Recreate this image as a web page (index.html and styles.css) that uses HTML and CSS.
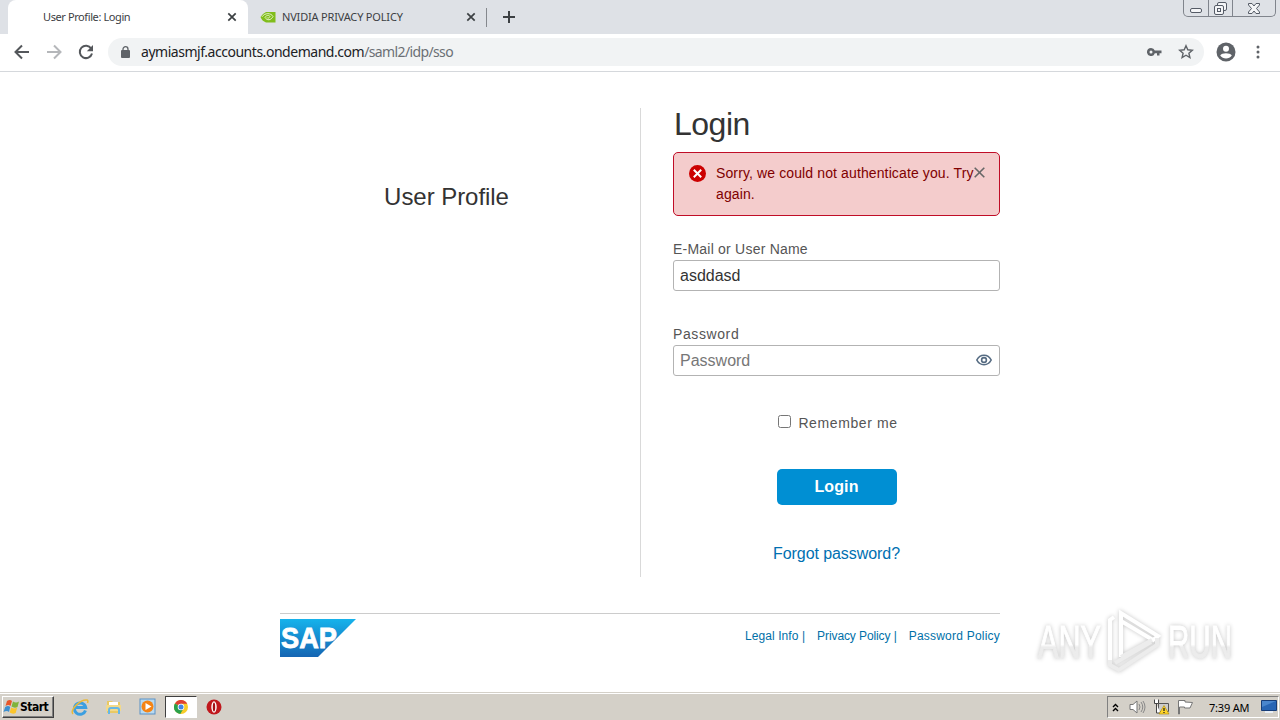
FILE: index.html
```html
<!DOCTYPE html>
<html lang="en">
<head>
    <meta charset="UTF-8">
    <meta name="viewport" content="width=device-width, initial-scale=1.0">
    <title>User Profile: Login</title>
    <link rel="stylesheet" href="styles.css">
</head>
<body>
    <!-- browser tabs -->
    <div class="tabstrip">
        <div class="tab active">
            <span class="tab-title">User Profile: Login</span>
            <svg class="tab-close" width="10" height="10" viewBox="0 0 10 10"><path d="M1.3 1.3l7.4 7.4M8.7 1.3L1.3 8.7"/></svg>
        </div>
        <div class="tab">
            <svg class="favicon" width="16" height="12" viewBox="0 0 16 12">
                <path fill="#80bd1c" d="M6 1h9.500v10.500H6Q2 10 .5 6 2 3 6 1z"/>
                <path fill="none" stroke="#e3f3c4" stroke-width="1" d="M2 5.800C5 1.500 11 1.800 13 5.500 11 9.500 7 9.800 5 6.500c1-2.500 4.500-2.500 5-1-1 2-2.500 2-3 1"/>
            </svg>
            <span class="tab-title policy">NVIDIA PRIVACY POLICY</span>
            <svg class="tab-close" width="10" height="10" viewBox="0 0 10 10"><path d="M1.3 1.3l7.4 7.4M8.7 1.3L1.3 8.7"/></svg>
        </div>
        <div class="separator"></div>
        <svg class="new-tab" width="12" height="12" viewBox="0 0 12 12"><path d="M6 0v12M0 6h12"/></svg>
        <div class="win-controls">
            <span class="min"><svg width="12" height="5"><rect x="0.5" y="0.5" width="11" height="4" rx="1.5"/></svg></span>
            <span class="max"><svg width="13" height="13"><path d="M3.500 3V2Q3.500 .5 5 .5H11Q12.500 .5 12.500 2V7Q12.500 8.500 11 8.500H10"/><rect x="0.5" y="3.5" width="9" height="9" rx="1.5"/><rect x="3.5" y="6.5" width="3" height="3"/></svg></span>
            <span class="close"><svg width="12" height="11"><path d="M.5 .5H4L6 3 8 .5H11.500V2L8.500 5.500 11.500 9V10.500H8L6 8 4 10.500H.5V9L3.500 5.500 .5 2z"/></svg></span>
        </div>
    </div>

    <!-- toolbar with address bar -->
    <div class="toolbar">
        <svg class="nav back" width="16" height="16" viewBox="0 0 16 16"><path d="M15 8H2M8 1.500L1.500 8 8 14.500"/></svg>
        <svg class="nav forward" width="16" height="16" viewBox="0 0 16 16"><path d="M1 8h13M8 1.500L14.500 8 8 14.500"/></svg>
        <svg class="nav reload" width="16" height="16" viewBox="0 0 16 16"><path d="M13.200 4.500A6.200 6.200 0 1 0 14 9.500"/><path class="solid" d="M15 1v6.200H8.800z"/></svg>
        <div class="address">
            <svg width="9" height="12" viewBox="0 0 9 12"><rect y="4" width="9" height="8" rx="1" fill="#5f6368"/><path d="M2 5V3.200a2.500 2.500 0 0 1 5 0V5" fill="none" stroke="#5f6368" stroke-width="1.3"/></svg>
            <span class="url">aymiasmjf.accounts.ondemand.com<span class="path">/saml2/idp/sso</span></span>
            <svg class="key" width="15" height="8" viewBox="0 0 15 8"><path fill="#5f6368" fill-rule="evenodd" d="M4 0a4 4 0 1 0 3.800 5.200H10V7.500h2.500V5.200H14.500V2.600H7.800A4 4 0 0 0 4 0zM4 2.500a1.500 1.500 0 1 1 0 3 1.500 1.500 0 0 1 0-3z"/></svg>
            <svg class="star" width="16" height="15" viewBox="0 0 16 15"><path fill="none" stroke="#5f6368" stroke-width="1.4" d="M8 1.700l1.800 4.100 4.500.4-3.400 3 1 4.300L8 11.200l-3.900 2.300 1-4.300-3.400-3 4.500-.4z"/></svg>
        </div>
        <svg class="avatar" width="20" height="20" viewBox="0 0 20 20"><circle cx="10" cy="10" r="9.5" fill="#5f6368"/><circle cx="10" cy="6.7" r="3" fill="#fff"/><path fill="#fff" d="M4.200 13.600c1.500-3 10-3 11.600 0-2.600 4-9 4-11.600 0z"/></svg>
        <svg class="more" width="4" height="14" viewBox="0 0 4 14"><circle cx="2" cy="2" r="1.5"/><circle cx="2" cy="7" r="1.5"/><circle cx="2" cy="12" r="1.5"/></svg>
    </div>

    <main class="page">
        <div class="columns">
            <div class="intro">User Profile</div>
            <form class="login">
                <h1>Login</h1>
                <div class="error">
                    <svg width="17" height="17" viewBox="0 0 17 17"><circle cx="8.5" cy="8.5" r="8.5" fill="#c00"/><path d="M4.800 4.800l7.400 7.400M12.200 4.800l-7.400 7.400" stroke="#fff" stroke-width="2"/></svg>
                    <p>Sorry, we could not authenticate you. Try<br>again.</p>
                    <svg class="dismiss" width="11" height="11" viewBox="0 0 11 11"><path d="M.7.7l9.600 9.600M10.300.7L.7 10.300"/></svg>
                </div>
                <label class="field-label user" for="user">E-Mail or User Name</label>
                <div class="field"><input id="user" type="text" value="asddasd"></div>
                <label class="field-label pass" for="pass">Password</label>
                <div class="field">
                    <input id="pass" type="password" placeholder="Password">
                    <svg width="16" height="12" viewBox="0 0 16 12"><path d="M.8 6C4-.3 12-.3 15.200 6 12 12.300 4 12.300 .8 6z"/><circle cx="8" cy="6" r="2.4"/></svg>
                </div>
                <label class="remember"><input type="checkbox"><span>Remember me</span></label>
                <button class="submit" type="button">Login</button>
                <a class="forgot">Forgot password?</a>
            </form>
        </div>
        <footer class="footer">
            <svg width="76" height="38" viewBox="0 0 76 38">
                <defs><linearGradient id="sap" x1="0" y1="0" x2="0" y2="1"><stop offset="0" stop-color="#16b3ec"/><stop offset="1" stop-color="#1565b3"/></linearGradient></defs>
                <path fill="url(#sap)" d="M0 0h76L38 38H0z"/>
                <text class="sap" x="1" y="29" textLength="56" lengthAdjust="spacingAndGlyphs">SAP</text>
            </svg>
            <div class="links">
                <a class="legal">Legal Info |</a>
                <a class="privacy">Privacy Policy |</a>
                <a class="policy-link">Password Policy</a>
            </div>
        </footer>

        <svg class="watermark" width="240" height="74" viewBox="0 0 240 74">
            <defs><linearGradient id="fade" x1="0" y1="0" x2="0" y2="1"><stop offset=".55" stop-color="#fff"/><stop offset=".6" stop-color="#ececec"/></linearGradient></defs>
            <g class="letters">
                <text x="7" y="54" textLength="63" lengthAdjust="spacingAndGlyphs">ANY</text>
                <text x="137" y="54" textLength="64" lengthAdjust="spacingAndGlyphs">RUN</text>
            </g>
            <g class="play">
                <path d="M79 56V16l4-3M90 53V9l37 23-5 4L90 17"/>
                <path class="shade" d="M90 53l31-17M79 56v5l9 5 38-25v-7M84 59l36-21"/>
            </g>
        </svg>
    </main>

    <!-- windows taskbar -->
    <div class="taskbar">
        <div class="start">
            <svg width="17" height="16" viewBox="0 0 17 16">
                <path fill="#e8562a" d="M4 2q3-2 5 0L7.500 7q-2-2-5 0z"/>
                <path fill="#80b33c" d="M10 2.500q3 2 6 0L14.500 8q-3 1.500-6-.5z"/>
                <path fill="#3d8fd0" d="M2.200 8q3-2 5 0L6 13q-2-2-5.500 0z"/>
                <path fill="#fbc52c" d="M8.200 8.500q3 2 6 0L12.700 14q-3 1.500-6-.5z"/>
            </svg>
            <span>Start</span>
        </div>
        <div class="quick">
            <svg width="18" height="18" viewBox="0 0 18 18"><path fill="none" stroke="#3c9fe0" stroke-width="3" d="M14.500 12.500A5.700 5.700 0 1 1 14.700 9.500H5"/><path fill="none" stroke="#e9b93a" stroke-width="1.5" d="M2 16C-2 12 10 1 16 2q1.500.5 .5 3"/></svg>
            <svg width="18" height="18" viewBox="0 0 18 18"><path fill="#e9c964" d="M2 3h5l1 1h7v11H2z"/><path fill="#fff" d="M4 4h9v3H4z"/><path fill="#f2d98a" d="M1 7h15v6H1z"/><path fill="none" stroke="#66b7e5" stroke-width="2" d="M4 16v-4q0-2 2-2h6q2 0 2 2v4"/></svg>
            <svg width="18" height="18" viewBox="0 0 18 18"><rect x="1" y="1" width="15" height="15" fill="#b9daf0" stroke="#5a91c5"/><circle cx="8.5" cy="8.5" r="6" fill="#f58414"/><path fill="#fff" d="M6.500 5l6 3.500-6 3.500z"/></svg>
        </div>
        <div class="running">
            <svg width="14" height="14" viewBox="0 0 14 14"><circle cx="7" cy="7" r="7" fill="#f8cc28"/><path fill="#df4033" d="M7 7L.9 3.500A7 7 0 0 1 13.200 3.700H7z"/><path fill="#2ba14b" d="M7 7L.9 3.500A7 7 0 0 0 6.300 14l3.200-5.500z"/><circle cx="7" cy="7" r="3.3" fill="#fff"/><circle cx="7" cy="7" r="2.5" fill="#4285e5"/></svg>
        </div>
        <svg class="opera" width="16" height="16" viewBox="0 0 16 16"><circle cx="8" cy="8" r="7.5" fill="#c0181d"/><ellipse cx="8" cy="8" rx="2.7" ry="5.7" fill="#fff"/><ellipse cx="8" cy="8" rx="1.2" ry="4.5" fill="#a51016"/></svg>
        <div class="tray">
            <svg class="chevrons" width="7" height="9" viewBox="0 0 7 9"><path d="M1 4l2.500-2.500L6 4M1 8l2.500-2.500L6 8"/></svg>
            <svg class="volume" width="17" height="16" viewBox="0 0 17 16"><path fill="#fff" stroke="#777" d="M1 5.500h3L8 2v12l-4-3.500H1z"/><path fill="none" stroke="#888" d="M10 5q2 3 0 6M12 3q3.500 5 0 10M14 2q4 6 0 12"/></svg>
            <svg class="network" width="17" height="16" viewBox="0 0 17 16"><path fill="#ccc" stroke="#555" d="M5.500 4.500h10v8h-10z"/><path fill="#fff" stroke="#444" d="M1.500 .5v4h4v-4M3.500 5v9h4"/><path fill="#ffd52b" stroke="#a88500" stroke-width=".6" d="M11 6.500l5 8.500H6z"/><path stroke="#222" stroke-width="1.3" d="M11 9v3m0 1v1"/></svg>
            <svg class="flag" width="17" height="16" viewBox="0 0 17 16"><path fill="#fff" stroke="#777" d="M1.500 15V1.500H8V3l7.500.5L13 9H7.500V8h-5v7z"/></svg>
            <span class="clock">7:39 AM</span>
            <svg class="desktop" width="17" height="14" viewBox="0 0 17 14"><path fill="#2865b4" stroke="#173d78" d="M.5 .5h15v10H.5z"/><path fill="#4a86cd" d="M1 1h14L1 7z"/><path fill="#e8eef5" d="M4 11h8v2H4z"/></svg>
        </div>
    </div>
</body>
</html>
```
FILE: styles.css
```css
* {
    box-sizing: border-box;
}

body {
    margin: 0;
    width: 1280px;
    height: 720px;
    display: flex;
    flex-direction: column;
    overflow: hidden;
    background: #fff;
    font-family: "Liberation Sans", Arial, sans-serif;
}

svg {
    display: block;
    flex: none;
}

/* tabs */
.tabstrip {
    display: flex;
    height: 34px;
    background: #dee1e6;
    padding-left: 8px;
}

.tab {
    display: flex;
    align-items: center;
    width: 238px;
    padding: 0 10px 0 12px;
    font-family: "Noto Sans", sans-serif;
    font-size: 11px;
    color: #3c4043;
}

.tab.active {
    width: 240px;
    padding: 0 11px 0 35px;
    border-radius: 8px 8px 0 0;
    background: #fff;
}

.tab-title {
    padding-bottom: 2px;
    letter-spacing: -0.4px;
}

.tab-title.policy {
    letter-spacing: -0.18px;
}

.favicon {
    margin-right: 6px;
}

.tab-close {
    margin-left: auto;
    stroke: #3c4043;
    stroke-width: 1.7;
}

.separator {
    width: 1px;
    height: 19px;
    margin-top: 8px;
    background: #85888d;
}

.new-tab {
    margin: 11px 0 0 16px;
    stroke: #3c4043;
    stroke-width: 2;
}

.win-controls {
    display: flex;
    width: 93px;
    height: 17px;
    margin: 0 4px 0 auto;
    border: 1px solid #80848c;
    border-top: 0;
    border-radius: 0 0 5px 5px;
}

.win-controls svg {
    fill: #f4f5f7;
    stroke: #555b66;
}

.win-controls span {
    display: flex;
    justify-content: center;
    width: 25px;
    padding-top: 2px;
    border-right: 1px solid #80848c;
}

.win-controls .min {
    padding-top: 8px;
}

.win-controls .close {
    width: 42px;
    padding-top: 3px;
    border-right: 0;
}

/* toolbar */
.toolbar {
    display: flex;
    align-items: center;
    height: 38px;
    padding: 0 20px 2px 14px;
    border-bottom: 1px solid #d5d8dc;
}

.nav {
    margin-right: 16px;
    fill: none;
    stroke: #54575b;
    stroke-width: 2;
}

.forward {
    stroke: #b5b7ba;
}

.reload {
    margin-right: 14px;
}

.reload .solid {
    fill: #54575b;
    stroke: none;
}

.address {
    display: flex;
    align-items: center;
    width: 1096px;
    height: 28px;
    padding: 0 10px 0 13px;
    border-radius: 14px;
    background: #f1f3f4;
}

.url {
    margin-left: 11px;
    font-family: "Noto Sans", sans-serif;
    font-size: 14px;
    letter-spacing: -0.47px;
    color: #202124;
}

.path {
    letter-spacing: -0.62px;
    color: #6b6f74;
}

.key {
    margin-left: auto;
}

.star {
    margin-left: 16px;
}

.avatar {
    margin-left: 12px;
}

.more {
    margin-left: auto;
    fill: #5f6368;
}

/* page */
.page {
    position: relative;
    flex: 1;
    padding: 36px 280px 0;
}

.columns {
    display: flex;
    height: 469px;
}

.intro {
    width: 361px;
    padding: 75px 27px 0 0;
    border-right: 1px solid #d9d9d9;
    font-size: 24px;
    line-height: 28px;
    letter-spacing: -0.05px;
    text-align: center;
    color: #333;
}

.login {
    display: flex;
    flex-direction: column;
    align-items: center;
    width: 327px;
    margin-left: 32px;
}

.login h1 {
    align-self: flex-start;
    margin: 0 0 0 1px;
    height: 44px;
    font-size: 32px;
    font-weight: normal;
    line-height: 33px;
    letter-spacing: -0.5px;
    color: #333;
}

.error {
    display: flex;
    width: 327px;
    height: 64px;
    padding: 12px 14px 0 15px;
    border: 1px solid #c00d27;
    border-radius: 5px;
    background: #f4cccc;
    color: #800000;
}

.error p {
    width: 258px;
    margin: -2px 0 0 10px;
    font-size: 14px;
    line-height: 21px;
    letter-spacing: 0.12px;
    white-space: nowrap;
}

.dismiss {
    margin: 2px 0 0;
    stroke: #666;
    stroke-width: 1.6;
}

.field-label {
    align-self: flex-start;
    height: 20px;
    font-size: 14px;
    line-height: 18px;
    color: #555;
}

.field-label.user {
    margin-top: 24px;
    letter-spacing: 0.22px;
}

.field-label.pass {
    margin-top: 34px;
    letter-spacing: 0.6px;
}

.field {
    display: flex;
    align-items: center;
    width: 327px;
    height: 31px;
    padding: 0 7px 0 6px;
    border: 1px solid #b3b3b3;
    border-radius: 3px;
}

.field input {
    flex: 1;
    min-width: 0;
    padding: 0;
    border: 0;
    outline: 0;
    background: none;
    font: 16px "Liberation Sans", Arial, sans-serif;
    color: #333;
}

.field input::placeholder {
    color: #777;
}

.field svg {
    margin-bottom: 1px;
    fill: none;
    stroke: #556b82;
    stroke-width: 1.6;
}

.remember {
    display: flex;
    align-items: center;
    height: 20px;
    margin: 37px 0 0 3px;
    font-size: 14px;
    letter-spacing: 0.6px;
    color: #555;
}

.remember input {
    width: 13px;
    height: 13px;
    margin: -3px 7px 0 0;
}

.submit {
    width: 120px;
    height: 36px;
    margin-top: 36px;
    border: 0;
    border-radius: 5px;
    background: #008fd3;
    font: bold 16px "Liberation Sans", Arial, sans-serif;
    letter-spacing: 0.1px;
    color: #fff;
}

.forgot {
    margin-top: 39px;
    font-size: 16px;
    line-height: 20px;
    letter-spacing: -0.07px;
    color: #0070b1;
}

.footer {
    display: flex;
    justify-content: space-between;
    margin-top: 36px;
    padding-top: 5px;
    border-top: 1px solid #ccc;
}

.sap {
    font: bold 29px "Liberation Sans", Arial, sans-serif;
    fill: #fff;
    stroke: #fff;
    stroke-width: 0.8;
}

.links {
    display: flex;
    gap: 12px;
    padding-top: 10px;
    font-size: 12px;
    color: #0070a8;
}

.legal {
    letter-spacing: 0.08px;
}

.privacy {
    letter-spacing: -0.1px;
}

.policy-link {
    letter-spacing: 0.22px;
}

.watermark {
    position: absolute;
    left: 1031px;
    top: 532px;
    filter: drop-shadow(0 0 2px #c4c4c4);
}

.letters {
    font: 46px "Liberation Sans", Arial, sans-serif;
    fill: url(#fade);
    stroke: url(#fade);
    stroke-width: 1;
}

.play {
    fill: none;
    stroke: #fff;
    stroke-width: 4;
}

.shade {
    stroke: #ececec;
}

/* taskbar */
.taskbar {
    display: flex;
    align-items: center;
    height: 28px;
    padding: 1px 1px 0 2px;
    border-top: 1px solid #d4d0c8;
    box-shadow: inset 0 1px #fff;
    background: #d4d0c8;
}

.start {
    display: flex;
    align-items: center;
    width: 52px;
    height: 22px;
    border: 1px solid;
    border-color: #fff #404040 #404040 #fff;
    box-shadow: inset -1px -1px #808080;
    font: bold 12px "DejaVu Sans Condensed", "DejaVu Sans", sans-serif;
    letter-spacing: -0.5px;
    color: #000;
}

.quick {
    display: flex;
    gap: 16px;
    margin-left: 17px;
}

.running {
    display: flex;
    align-items: center;
    justify-content: center;
    width: 32px;
    height: 22px;
    margin-left: 8px;
    border: 1px solid;
    border-color: #404040 #fff #fff #404040;
    background: #fff;
}

.opera {
    margin-left: 9px;
}

.tray {
    display: flex;
    align-items: center;
    width: 172px;
    height: 22px;
    margin-left: auto;
    padding-left: 4px;
    border: 1px solid;
    border-color: #808080 #fff #fff #808080;
}

.chevrons {
    fill: none;
    stroke: #000;
    stroke-width: 1.4;
}

.volume {
    margin-left: 10px;
}

.network {
    margin-left: 7px;
}

.flag {
    margin-left: 7px;
}

.clock {
    margin-left: 15px;
    font-family: "Noto Sans", sans-serif;
    font-size: 11px;
    letter-spacing: -0.2px;
    white-space: nowrap;
}

.desktop {
    margin-left: auto;
}
```
